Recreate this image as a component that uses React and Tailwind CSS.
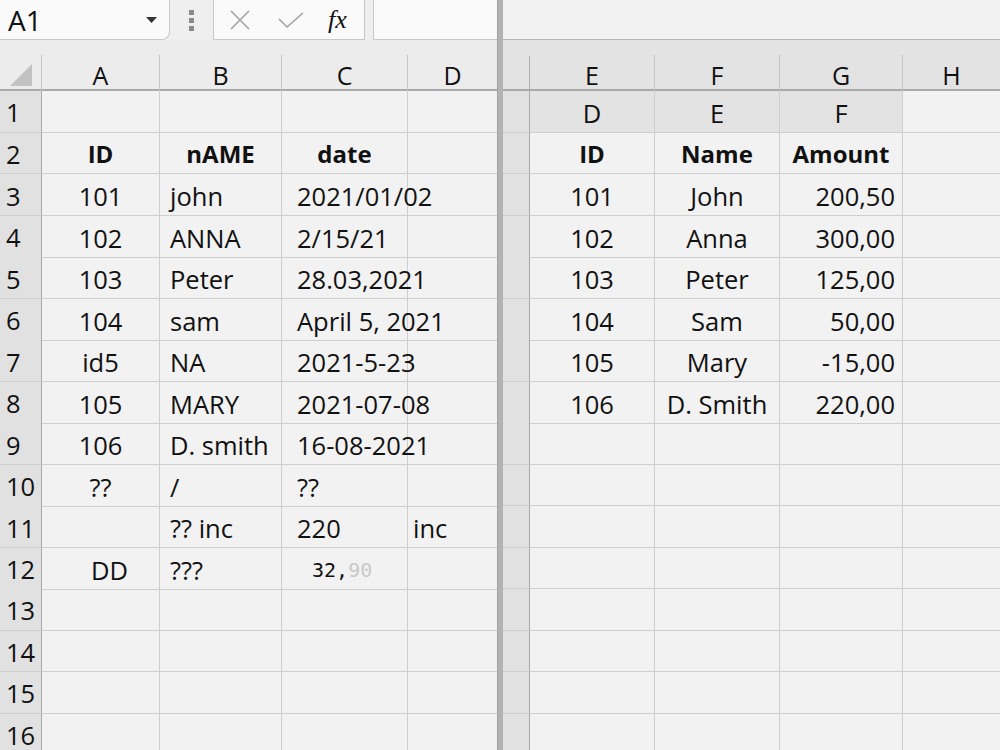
import React from "react";

const FONT = { fontFamily: '"Open Sans", "Noto Sans", sans-serif' };

// left pane data: [A, B, C, D]
const LEFT_ROWS = [
  ["", "", "", ""],
  ["ID", "nAME", "date", ""],
  ["101", "john", "2021/01/02", ""],
  ["102", "ANNA", "2/15/21", ""],
  ["103", "Peter", "28.03,2021", ""],
  ["104", "sam", "April 5, 2021", ""],
  ["id5", "NA", "2021-5-23", ""],
  ["105", "MARY", "2021-07-08", ""],
  ["106", "D. smith", "16-08-2021", ""],
  ["??", "/", "??", ""],
  ["", "?? inc", "220", "inc"],
  ["DD", "???", "__MONO__", ""],
  ["", "", "", ""],
  ["", "", "", ""],
  ["", "", "", ""],
  ["", "", "", ""],
];

const RIGHT_ROWS = [
  ["D", "E", "F"],
  ["ID", "Name", "Amount"],
  ["101", "John", "200,50"],
  ["102", "Anna", "300,00"],
  ["103", "Peter", "125,00"],
  ["104", "Sam", "50,00"],
  ["105", "Mary", "-15,00"],
  ["106", "D. Smith", "220,00"],
  ["", "", ""],
  ["", "", ""],
  ["", "", ""],
  ["", "", ""],
  ["", "", ""],
  ["", "", ""],
  ["", "", ""],
  ["", "", ""],
];

const LINE = "border-[#cfcfcf]";

function HeaderCell({ label, last }) {
  return (
    <div className="flex flex-col h-full">
      <div className="h-[15px]" />
      <div className={`flex-1 flex items-center justify-center pt-[2px] text-[25px] text-[#111] ${last ? "" : "border-r border-[#c4c4c4]"}`}>
        {label}
      </div>
    </div>
  );
}

function TopBar() {
  return (
    <div className="h-[40px] flex items-stretch bg-[#efefef]">
      <div className="w-[170px] h-[40px] bg-[#fafafa] border-r border-b border-[#c8c8c8] rounded-br-lg flex items-center justify-between pl-[8px] pr-[12px]">
        <span className="text-[28px] text-[#111] leading-none">A1</span>
        <svg width="11" height="6" viewBox="0 0 11 6"><path d="M0 0 L11 0 L5.5 6 Z" fill="#333" /></svg>
      </div>
      <div className="w-[43px] flex flex-col items-center justify-center gap-[3px]">
        <div className="w-[5px] h-[5px] bg-[#8a8a8a]" />
        <div className="w-[5px] h-[5px] bg-[#8a8a8a]" />
        <div className="w-[5px] h-[5px] bg-[#8a8a8a]" />
      </div>
      <div className="w-[152px] h-[40px] bg-[#fafafa] border-l border-r border-b border-[#c8c8c8] flex items-center">
        <svg width="22" height="22" viewBox="0 0 22 22" className="ml-[15px]">
          <path d="M2 2 L20 20 M20 2 L2 20" stroke="#a3a3a3" strokeWidth="1.6" fill="none" />
        </svg>
        <svg width="26" height="18" viewBox="0 0 26 18" className="ml-[27px]">
          <path d="M1 8 L9 16 L25 2" stroke="#a3a3a3" strokeWidth="1.6" fill="none" />
        </svg>
        <span className="ml-[24px] text-[26px] italic text-[#111] leading-none" style={{ fontFamily: '"Liberation Serif", serif' }}>fx</span>
      </div>
      <div className="w-[8px]" />
      <div className="flex-1 h-[40px] bg-[#fafafa] border-l border-b border-[#c8c8c8]" />
    </div>
  );
}

function LeftPane() {
  const align = [
    "justify-center",
    "justify-start pl-[10px]",
    "justify-start pl-[15px]",
    "justify-start pl-[5px]",
  ];
  return (
    <div className="w-[497px] flex flex-col">
      <TopBar />
      <div className="h-[51px] shrink-0 grid grid-cols-[42px_118px_122px_126px_89px] bg-[#ececec] border-b-2 border-[#a9a9a9]">
        <div className="flex flex-col h-full">
          <div className="h-[15px]" />
          <div className="flex-1 border-r border-[#c4c4c4] flex items-center justify-center">
            <svg width="22" height="22" viewBox="0 0 22 22"><path d="M22 0 L22 22 L0 22 Z" fill="#c2c2c2" /></svg>
          </div>
        </div>
        {["A", "B", "C", "D"].map((l, i) => (
          <HeaderCell key={l} label={l} last={i === 3} />
        ))}
      </div>
      {LEFT_ROWS.map((row, r) => (
        <div key={r} className="h-[41.5px] grid grid-cols-[42px_118px_122px_126px_89px] shrink-0">
          <div className={`bg-[#e1e1e1] border-r border-b border-r-[#a9a9a9] ${LINE} flex items-center pt-[2px] pl-[6px] text-[25.5px] text-[#111]`}>
            {r + 1}
          </div>
          {row.map((cell, c) => (
            <div
              key={c}
              className={`flex items-center pt-[3px] ${align[c]} border-b ${c < 3 ? "border-r" : ""} ${LINE} text-[#111] whitespace-nowrap ${r === 1 ? "font-bold text-[24px]" : "text-[25.5px]"} ${r === 1 && c < 3 ? "!justify-center !pl-0" : ""} ${r === 11 && c === 0 ? "pl-[18px]" : ""}`}
            >
              {cell === "__MONO__" ? (
                <span className="pl-[15px] text-[20px]" style={{ fontFamily: '"DejaVu Sans Mono", monospace' }}>
                  32,<span className="text-[#c9c9c9]">90</span>
                </span>
              ) : (
                cell
              )}
            </div>
          ))}
        </div>
      ))}
    </div>
  );
}

function RightPane() {
  return (
    <div className="flex-1 flex flex-col">
      <div className="h-[40px] bg-[#f2f2f2] border-b border-[#b5b5b5] shrink-0" />
      <div className="h-[51px] shrink-0 grid grid-cols-[27px_125px_125px_123px_1fr] bg-[#e3e3e3] border-b-2 border-[#a9a9a9]">
        <div className="flex flex-col h-full">
          <div className="h-[16px]" />
          <div className="flex-1 border-r border-[#b0b0b0]" />
        </div>
        {["E", "F", "G", "H"].map((l, i) => (
          <HeaderCell key={l} label={l} last={i === 3} />
        ))}
      </div>
      {RIGHT_ROWS.map((row, r) => (
        <div key={r} className="h-[41.5px] shrink-0 grid grid-cols-[27px_125px_125px_123px_1fr]">
          <div className={`bg-[#e1e1e1] border-r border-b border-r-[#a9a9a9] ${LINE}`} />
          {row.map((cell, c) => (
            <div
              key={c}
              className={`flex items-center pt-[3px] border-r border-b ${LINE} text-[#111] whitespace-nowrap ${
                c === 2 && r > 1 ? "justify-end pr-[7px]" : "justify-center"
              } ${r === 0 ? "bg-[#e3e3e3]" : ""} ${r === 1 ? "font-bold text-[24px]" : "text-[25.5px]"}`}
            >
              {cell}
            </div>
          ))}
          <div className={`border-b ${LINE}`} />
        </div>
      ))}
    </div>
  );
}

export default function App() {
  return (
    <div className="w-[1000px] h-[750px] overflow-hidden flex bg-[#f2f2f2]" style={FONT}>
      <LeftPane />
      <div className="w-[6px] h-full bg-[#b3b3b3] border-l border-[#a0a0a0] shrink-0" />
      <RightPane />
    </div>
  );
}
